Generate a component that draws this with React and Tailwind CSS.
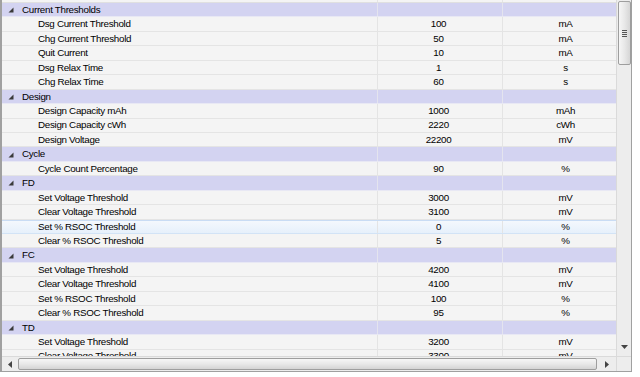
import React from 'react';

const sections = [
  {
    title: 'Current Thresholds',
    rows: [
      ['Dsg Current Threshold', '100', 'mA'],
      ['Chg Current Threshold', '50', 'mA'],
      ['Quit Current', '10', 'mA'],
      ['Dsg Relax Time', '1', 's'],
      ['Chg Relax Time', '60', 's'],
    ],
  },
  {
    title: 'Design',
    rows: [
      ['Design Capacity mAh', '1000', 'mAh'],
      ['Design Capacity cWh', '2220', 'cWh'],
      ['Design Voltage', '22200', 'mV'],
    ],
  },
  { title: 'Cycle', rows: [['Cycle Count Percentage', '90', '%']] },
  {
    title: 'FD',
    rows: [
      ['Set Voltage Threshold', '3000', 'mV'],
      ['Clear Voltage Threshold', '3100', 'mV'],
      ['Set % RSOC Threshold', '0', '%', true],
      ['Clear % RSOC Threshold', '5', '%'],
    ],
  },
  {
    title: 'FC',
    rows: [
      ['Set Voltage Threshold', '4200', 'mV'],
      ['Clear Voltage Threshold', '4100', 'mV'],
      ['Set % RSOC Threshold', '100', '%'],
      ['Clear % RSOC Threshold', '95', '%'],
    ],
  },
  {
    title: 'TD',
    rows: [
      ['Set Voltage Threshold', '3200', 'mV'],
      ['Clear Voltage Threshold', '3300', 'mV'],
    ],
  },
];

function Expander() {
  return (
    <svg width="6" height="6" viewBox="0 0 6 6" className="ml-[6px] mr-[8px] shrink-0">
      <polygon points="5.5,0.5 5.5,5.5 0.5,5.5" fill="#3a3a3a" />
    </svg>
  );
}

function HeaderRow({ title }) {
  return (
    <div className="flex h-[14.45px] shrink-0 bg-[#d3d3f1] border-b border-[#e8e8f4]">
      <div className="w-[375px] flex items-center pt-[1px]">
        <Expander />
        <span>{title}</span>
      </div>
      <div className="w-[125px] border-l border-[#e4e4ee]" />
      <div className="flex-1 border-l border-[#e4e4ee]" />
    </div>
  );
}

function DataRow({ name, value, unit, hot }) {
  return (
    <div
      className={`flex h-[14.45px] shrink-0 border-b ${
        hot ? 'bg-gradient-to-b from-[#f4f8fd] to-[#e6f0fb] border-[#d2e3f6] border-t border-t-[#c9dcf4]' : 'bg-[#f4f4f4] border-[#e4e4e4]'
      }`}
    >
      <div className="w-[375px] flex items-center pt-[1px] pl-[36px]">{name}</div>
      <div className="w-[125px] flex items-center justify-center pt-[1px] pr-[3px] border-l border-[#e4e4e4]">{value}</div>
      <div className="flex-1 flex items-center justify-center pt-[1px] pl-[12px] border-l border-[#e4e4e4]">{unit}</div>
    </div>
  );
}

function VScroll() {
  return (
    <div className="w-[15px] shrink-0 bg-[#ededed] border-l border-[#dadada] flex flex-col items-center">
      <div className="mt-[1px] w-[13px] h-[64px] rounded-[2px] border border-[#9e9e9e] bg-gradient-to-r from-[#f6f6f6] via-[#e8e8e8] to-[#d6d6d6] flex flex-col items-center justify-center gap-[1px]">
        <div className="w-[5px] h-[1px] bg-[#555]" />
        <div className="w-[5px] h-[1px] bg-[#555]" />
        <div className="w-[5px] h-[1px] bg-[#555]" />
        <div className="w-[5px] h-[1px] bg-[#555]" />
      </div>
      <div className="flex-1" />
      <svg width="7" height="4" viewBox="0 0 7 4" className="mb-[7px]">
        <polygon points="0,0 7,0 3.5,4" fill="#444" />
      </svg>
    </div>
  );
}

function HScroll() {
  return (
    <div className="h-[15px] shrink-0 flex bg-[#ededed] border-t border-[#dadada]">
      <div className="w-[16px] flex items-center justify-center">
        <svg width="4" height="7" viewBox="0 0 4 7">
          <polygon points="4,0 4,7 0,3.5" fill="#444" />
        </svg>
      </div>
      <div className="w-[581px] my-[1px] rounded-[2px] border border-[#9e9e9e] bg-gradient-to-b from-[#f6f6f6] via-[#e8e8e8] to-[#d4d4d4]" />
      <div className="w-[19px] flex items-center justify-center">
        <svg width="4" height="7" viewBox="0 0 4 7">
          <polygon points="0,0 0,7 4,3.5" fill="#444" />
        </svg>
      </div>
      <div className="w-[15px] bg-[#ededed] border-l border-[#dadada]" />
    </div>
  );
}

export default function App() {
  return (
    <div
      className="w-[640px] h-[377px] bg-white overflow-hidden text-[9.8px] tracking-[-0.3px] text-[#000]"
      style={{ fontFamily: '"Liberation Sans", Arial, sans-serif' }}
    >
      <div className="w-[632px] h-[372px] border-l-2 border-r border-b border-[#a0a0a0] flex flex-col">
        <div className="flex-1 flex min-h-0">
          <div className="flex-1 flex flex-col overflow-hidden">
            <div className="flex h-[3px] shrink-0 bg-[#f4f4f4] border-b border-[#e0e0e0]">
              <div className="w-[375px]" />
              <div className="w-[125px] border-l border-[#e4e4e4]" />
              <div className="flex-1 border-l border-[#e4e4e4]" />
            </div>
            {sections.map((s) => (
              <React.Fragment key={s.title}>
                <HeaderRow title={s.title} />
                {s.rows.map((r, i) => (
                  <DataRow key={i} name={r[0]} value={r[1]} unit={r[2]} hot={r[3]} />
                ))}
              </React.Fragment>
            ))}
          </div>
          <VScroll />
        </div>
        <HScroll />
      </div>
    </div>
  );
}
